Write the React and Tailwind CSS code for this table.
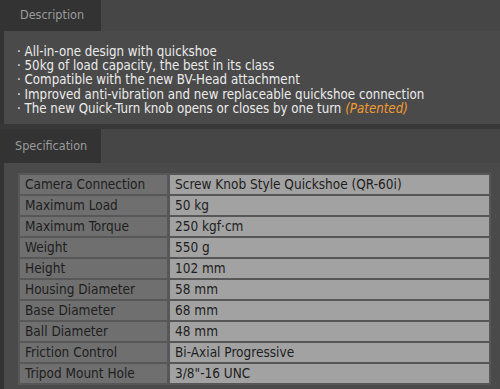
import React from 'react';

const features = [
  'All-in-one design with quickshoe',
  '50kg of load capacity, the best in its class',
  'Compatible with the new BV-Head attachment',
  'Improved anti-vibration and new replaceable quickshoe connection',
];

const specs = [
  ['Camera Connection', 'Screw Knob Style Quickshoe (QR-60i)'],
  ['Maximum Load', '50 kg'],
  ['Maximum Torque', '250 kgf·cm'],
  ['Weight', '550 g'],
  ['Height', '102 mm'],
  ['Housing Diameter', '58 mm'],
  ['Base Diameter', '68 mm'],
  ['Ball Diameter', '48 mm'],
  ['Friction Control', 'Bi-Axial Progressive'],
  ['Tripod Mount Hole', '3/8"-16 UNC'],
];

const font = { fontFamily: "'DejaVu Sans Condensed', 'DejaVu Sans', sans-serif" };

const TabBar = ({ label, h }) => (
  <div className={`flex ${h}`}>
    <div className="w-[101px] bg-[#333333] flex items-center pl-[15px] text-[12.5px] text-[#9b9b9b]">
      {label}
    </div>
    <div className="flex-1 bg-[#464646]" />
  </div>
);

const App = () => {
  return (
    <div className="w-[500px] h-[389px] bg-[#333333] overflow-hidden" style={font}>
      <TabBar label={<span className="pl-[5px]">Description</span>} h="h-[31px]" />
      <div className="ml-[4px] h-[93px] bg-[#4a4a4a] pt-[14px] pl-[13px] text-[13.2px] leading-[14.2px] text-[#ececec]">
        {features.map(f => (
          <div key={f}>· {f}</div>
        ))}
        <div>
          · The new Quick-Turn knob opens or closes by one turn{' '}
          <span className="italic text-[#f39a33]">(Patented)</span>
        </div>
      </div>
      <div className="h-[5px] bg-[#383838]" />
      <TabBar label="Specification" h="h-[34px]" />
      <div className="ml-[4px] h-[226px] bg-[#4a4a4a] pt-[10px] pl-[14px]">
        <div className="w-[473px] bg-[#575757] p-[2px] flex flex-col gap-[2px]">
          {specs.map(([k, v]) => (
            <div key={k} className="flex gap-[3px] h-[19px] text-[13.5px] text-[#1e1e1e]">
              <div className="w-[147px] bg-[#6f6f6f] pl-[5px] flex items-center">{k}</div>
              <div className="flex-1 bg-[#a2a2a2] pl-[5px] flex items-center">{v}</div>
            </div>
          ))}
        </div>
      </div>
    </div>
  );
};

export default App;
